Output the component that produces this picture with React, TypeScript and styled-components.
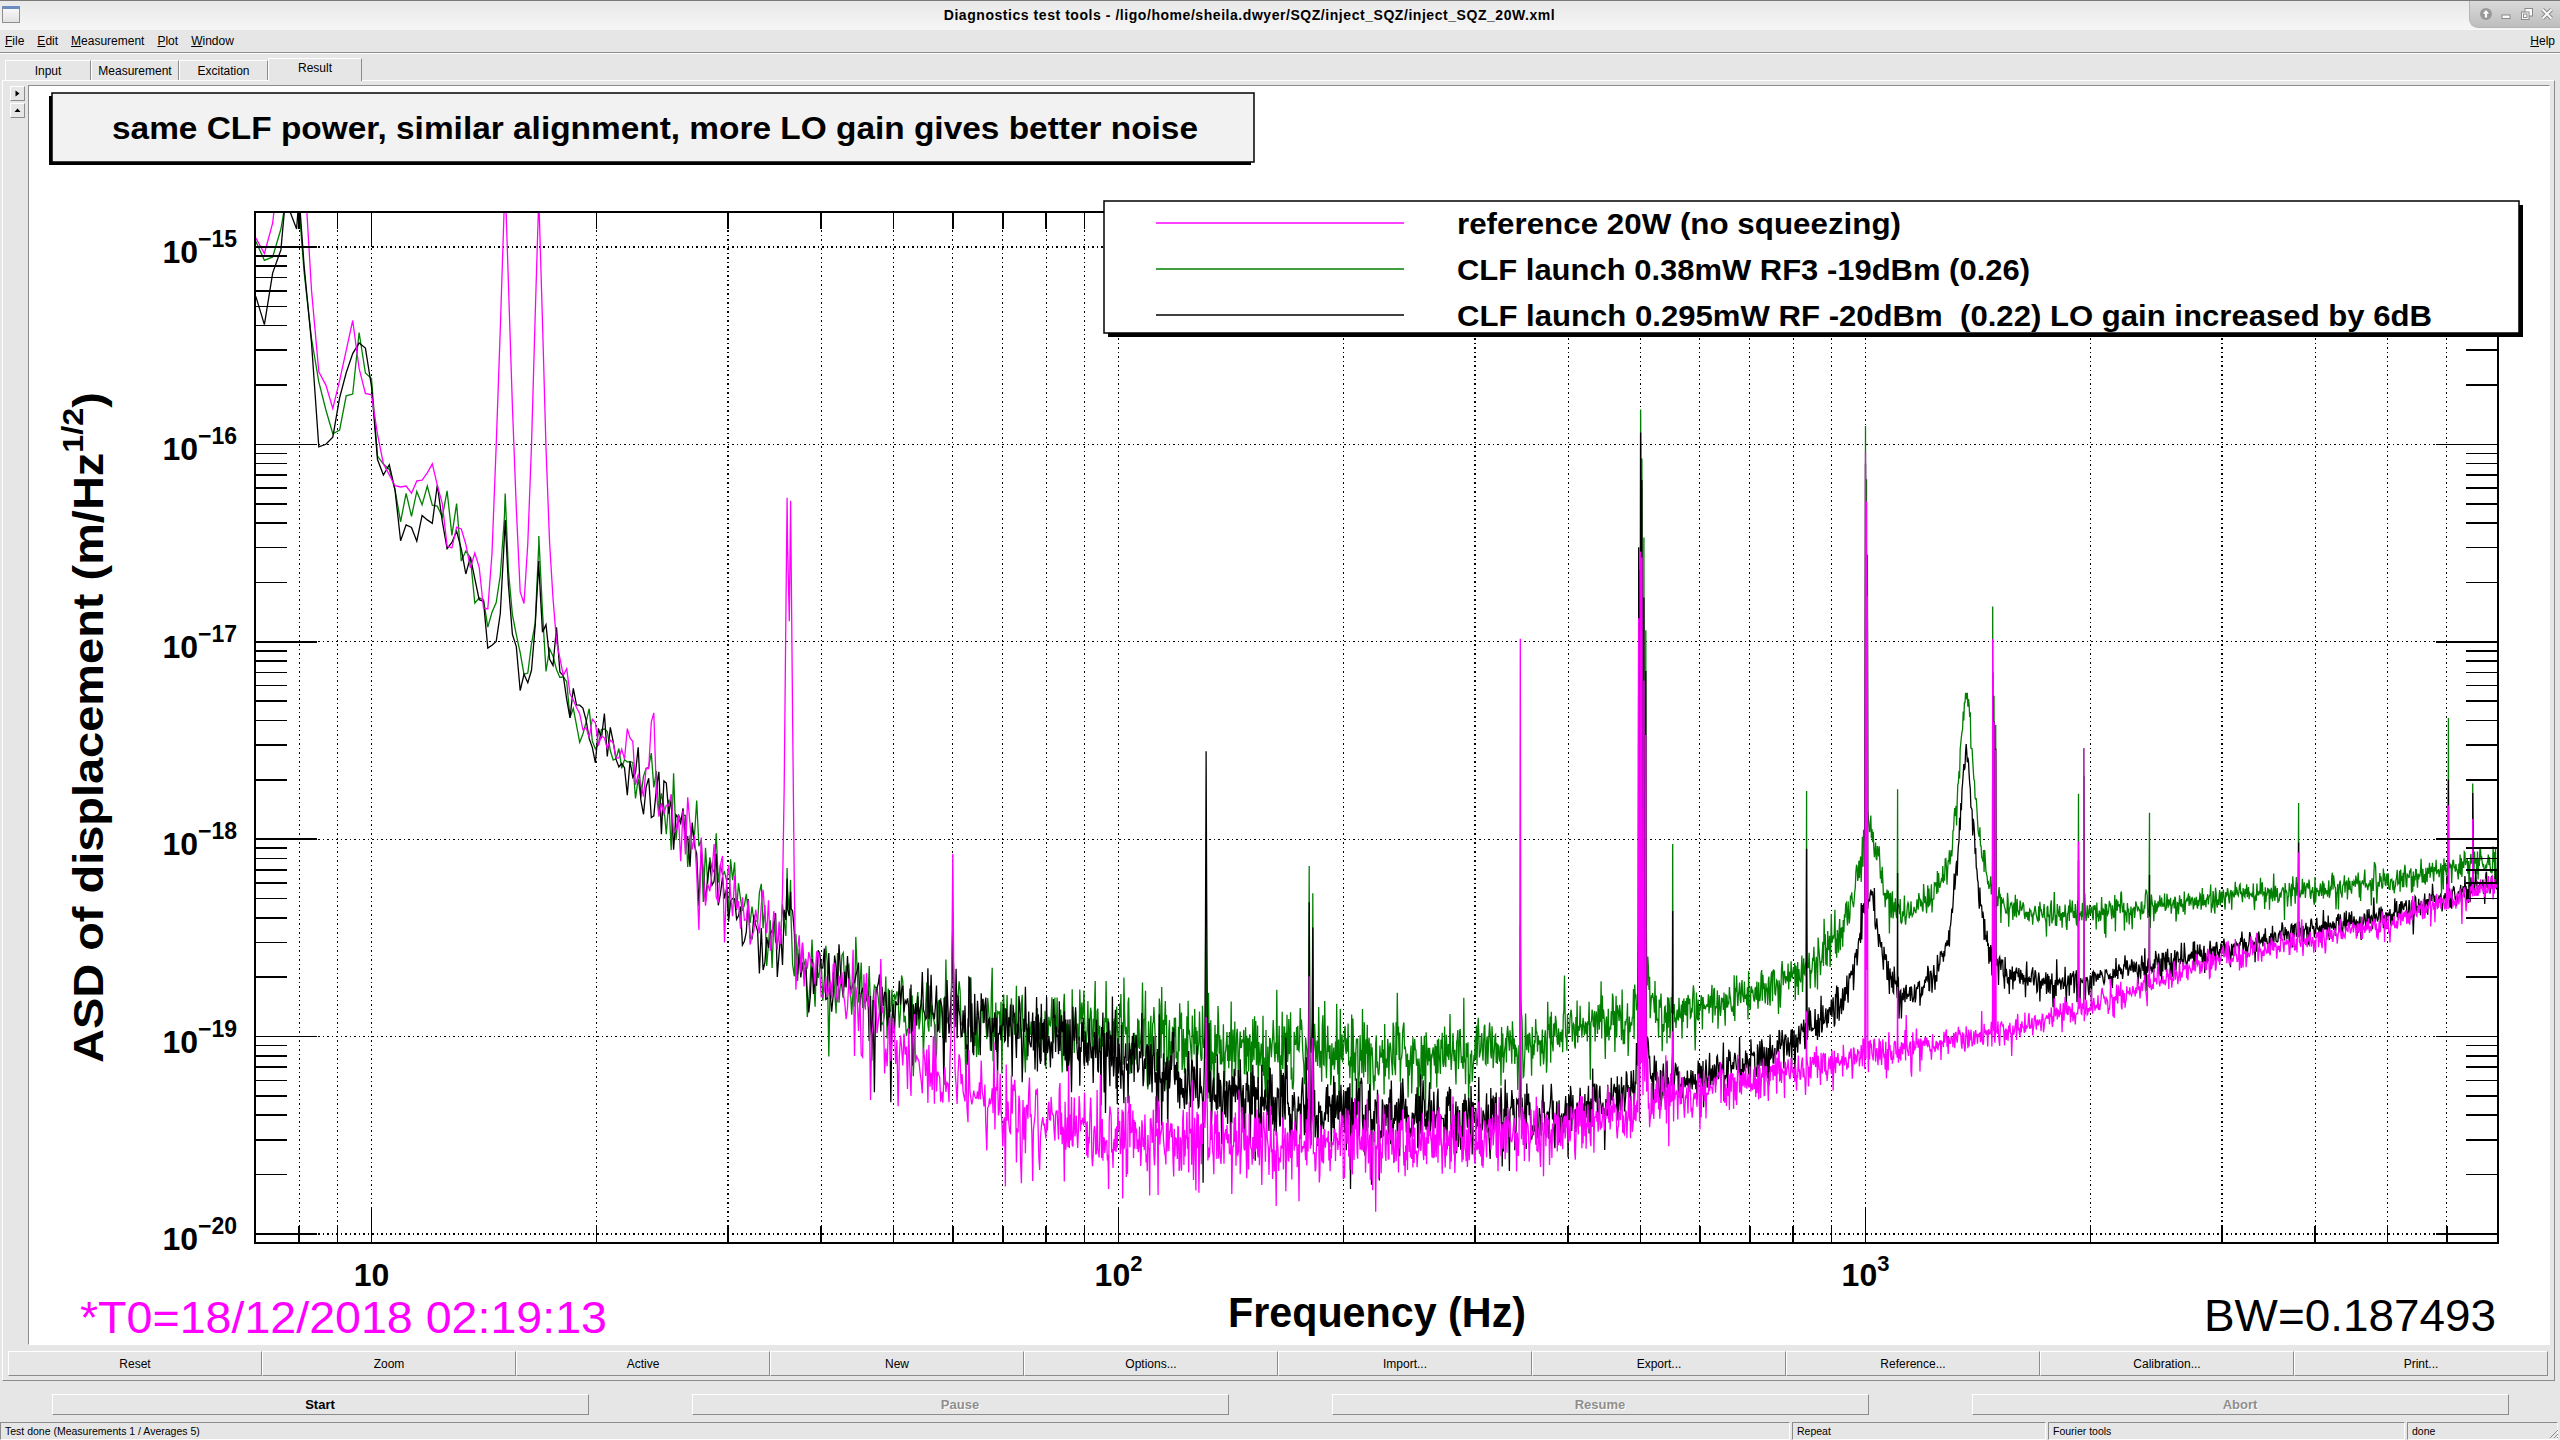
import React, { useMemo } from "react";
import styled, { createGlobalStyle } from "styled-components";

const UI_FONT = `"Liberation Sans", Arial, Helvetica, sans-serif`;
const FACE = "#e6e6e6";
const LIGHT = "#ffffff";
const DARK = "#8c8c8c";

const GlobalStyle = createGlobalStyle`
  html, body {
    margin: 0;
    padding: 0;
    overflow: hidden;
    background: ${FACE};
  }
  body {
    font-family: ${UI_FONT};
  }
`;

const Screen = styled.div`
  width: 2560px;
  height: 1440px;
  display: flex;
  flex-direction: column;
  background: ${FACE};
  font: 12px ${UI_FONT};
  color: #000;
  overflow: hidden;
`;

/* ---------- window title bar ---------- */

const TitleBar = styled.header`
  flex: none;
  height: 29px;
  border-top: 1px solid #7a7a7a;
  display: grid;
  grid-template-columns: 30px 1fr 91px;
  align-items: start;
  background: linear-gradient(#e8e8e8, #f6f6f6);
`;

const WindowIcon = styled.div`
  margin: 5px 0 0 2px;
  width: 18px;
  height: 17px;
  box-sizing: border-box;
  border: 1px solid #8f8f8f;
  border-top: 3px solid #6a8cc0;
  background: linear-gradient(#f8f8f8, #e2e2e2);
`;

const WindowTitle = styled.div`
  line-height: 28px;
  text-align: center;
  font-weight: bold;
  font-size: 14px;
  letter-spacing: 0.55px;
  white-space: nowrap;
`;

const WindowControls = styled.div`
  height: 27px;
  display: flex;
  align-items: center;
  justify-content: space-around;
  padding: 0 3px 0 6px;
  background: linear-gradient(#dadada, #bdbdbd);
  border-bottom-left-radius: 9px;
  border-left: 1px solid #b4b4b4;
  border-bottom: 1px solid #b4b4b4;
  box-sizing: border-box;
`;

/* ---------- menu ---------- */

const MenuBar = styled.nav`
  flex: none;
  height: 22px;
  display: flex;
  align-items: center;
  gap: 13px;
  padding: 0 5px;
  border-bottom: 1px solid ${DARK};
`;

const MenuItem = styled.span<{ $right?: boolean }>`
  margin-left: ${(p) => (p.$right ? "auto" : "0")};
`;

const Accel = styled.span`
  text-decoration: underline;
`;

/* ---------- tabs ---------- */

const TabStrip = styled.div`
  flex: none;
  height: 26px;
  border-top: 1px solid ${LIGHT};
  display: flex;
  align-items: flex-end;
  padding-left: 5px;
`;

const Tab = styled.div<{ $w: number; $active?: boolean }>`
  width: ${(p) => p.$w}px;
  height: ${(p) => (p.$active ? 23 : 20)}px;
  margin-bottom: ${(p) => (p.$active ? -1 : 0)}px;
  box-sizing: border-box;
  border-top: 1px solid ${LIGHT};
  border-left: 1px solid ${LIGHT};
  border-right: 1px solid ${DARK};
  background: ${FACE};
  display: flex;
  align-items: center;
  justify-content: center;
  padding-bottom: ${(p) => (p.$active ? 4 : 0)}px;
  position: relative;
  z-index: ${(p) => (p.$active ? 1 : 0)};
`;

const TabBody = styled.section`
  flex: none;
  height: 1301px;
  box-sizing: border-box;
  margin: 0 5px 0 2px;
  border: 1px solid;
  border-color: ${LIGHT} ${DARK} ${DARK} ${LIGHT};
  padding: 4px 4px 4px 0;
  display: flex;
  flex-direction: column;
  gap: 6px;
`;

const Workspace = styled.div`
  height: 1260px;
  display: flex;
`;

const SidePanel = styled.div`
  width: 25px;
  flex: none;
  display: flex;
  flex-direction: column;
  gap: 2px;
  padding: 1px 0 0 7px;
  box-sizing: border-box;
`;

const SideButton = styled.div`
  width: 15px;
  height: 15px;
  box-sizing: border-box;
  border: 1px solid;
  border-color: ${LIGHT} ${DARK} ${DARK} ${LIGHT};
  display: flex;
  align-items: center;
  justify-content: center;
`;

const CanvasFrame = styled.div`
  width: 2522px;
  height: 1260px;
  box-sizing: border-box;
  border: 1px solid;
  border-color: ${DARK} ${LIGHT} ${LIGHT} ${DARK};
  background: #fff;
`;

const PlotSvg = styled.svg`
  display: block;
`;

const PlotText = styled.text<{ $size: number; $bold?: boolean }>`
  font-family: ${UI_FONT};
  font-size: ${(p) => p.$size}px;
  font-weight: ${(p) => (p.$bold ? 700 : 400)};
  white-space: pre;
`;

const Sup = styled.tspan<{ $size: number }>`
  font-size: ${(p) => p.$size}px;
`;

const ButtonRow = styled.div`
  height: 25px;
  margin: 0 2px 0 5px;
  display: grid;
  grid-template-columns: repeat(10, 1fr);
`;

const PlotButton = styled.div`
  box-sizing: border-box;
  border: 1px solid;
  border-color: ${LIGHT} ${DARK} ${DARK} ${LIGHT};
  display: flex;
  align-items: center;
  justify-content: center;
`;

/* ---------- run controls + status ---------- */

const ControlRow = styled.div`
  flex: none;
  height: 41px;
  box-sizing: border-box;
  padding-top: 13px;
  display: grid;
  grid-template-columns: repeat(4, 1fr);
  justify-items: center;
  align-items: start;
`;

const ControlButton = styled.div<{ $disabled?: boolean }>`
  width: 537px;
  height: 21px;
  box-sizing: border-box;
  border: 1px solid;
  border-color: ${LIGHT} ${DARK} ${DARK} ${LIGHT};
  display: flex;
  align-items: center;
  justify-content: center;
  font-weight: bold;
  font-size: 13px;
  color: ${(p) => (p.$disabled ? "#8e8e8e" : "#000")};
  text-shadow: ${(p) => (p.$disabled ? `1px 1px 0 ${LIGHT}` : "none")};
`;

const StatusBar = styled.footer`
  flex: none;
  height: 18px;
  display: flex;
  gap: 2px;
  position: relative;
`;

const StatusCell = styled.div<{ $w: number }>`
  width: ${(p) => p.$w}px;
  flex: none;
  box-sizing: border-box;
  border: 1px solid;
  border-color: ${DARK} ${LIGHT} ${LIGHT} ${DARK};
  padding: 0 4px;
  font-size: 10.5px;
  line-height: 16px;
  white-space: nowrap;
  overflow: hidden;
`;

const Grip = styled.svg`
  position: absolute;
  right: 1px;
  bottom: 1px;
`;

/* ---------- plot geometry ---------- */

const X0 = 255;
const X1 = 2498;
const Y0 = 212;
const Y1 = 1243;
const DEC_X = 747;
const X10 = 371.5;
const DEC_Y = 197.4;
const Y15 = 247;

const fx = (f: number) => X10 + (Math.log10(f) - 1) * DEC_X;
const ly = (l: number) => Y15 + (-15 - l) * DEC_Y;

type Knot = [number, number];
type Bump = { f: number; w: number; h: number };
type Line = { f: number; w: number; top: [number, number, number] };

const KNOTS_M: Knot[] = [
  [7, -14.93], [7.3, -15.05], [7.6, -15.02], [7.8, -15.35], [8.05, -15.3],
  [8.3, -15.5], [8.5, -15.72], [9.0, -15.72], [9.5, -15.35], [9.75, -15.9],
  [10.0, -15.65], [10.2, -16.05], [10.8, -16.25], [11.5, -16.2], [11.8, -16.05],
  [12.3, -16.3], [13, -16.4], [14, -16.7], [14.3, -17.1], [15, -16.9],
  [16, -17.15], [17.5, -17.05], [18.5, -17.3], [20, -17.45], [24, -17.7],
  [26, -17.95], [29, -18.2], [32, -18.35], [35, -18.5], [40, -18.7],
  [45, -18.85], [50, -19.0], [60, -19.25], [70, -19.35], [80, -19.42],
  [100, -19.5], [150, -19.55], [200, -19.55], [300, -19.52], [400, -19.45],
  [500, -19.35], [700, -19.22], [1000, -19.1], [1500, -18.98], [2000, -18.85],
  [3000, -18.6], [5000, -18.42], [7000, -18.22],
];

const KNOTS_G: Knot[] = [
  [7, -15.0], [7.3, -15.1], [7.6, -15.2], [7.8, -15.15], [8.05, -15.3],
  [8.3, -15.55], [8.5, -15.7], [9.0, -16.15], [9.3, -15.7], [9.6, -15.5],
  [10, -15.7], [10.2, -16.1], [10.8, -16.25], [12, -16.3], [13, -16.45],
  [14, -16.75], [14.3, -17.0], [15, -16.85], [16, -17.2], [17.5, -17.1],
  [18.5, -17.3], [20, -17.45], [24, -17.72], [26, -17.95], [29, -18.2],
  [32, -18.38], [35, -18.52], [40, -18.7], [50, -18.85], [60, -18.9],
  [80, -18.95], [100, -18.97], [150, -19.05], [200, -19.1], [300, -19.1],
  [400, -18.98], [500, -18.92], [600, -18.87], [700, -18.8], [800, -18.72],
  [900, -18.6], [1000, -18.5], [1100, -18.5], [1200, -18.42], [1500, -18.42],
  [2000, -18.38], [3000, -18.3], [5000, -18.22], [7000, -18.1],
];

const KNOTS_K: Knot[] = [
  [7, -15.3], [7.3, -15.32], [7.6, -15.15], [7.8, -15.25], [8.05, -15.38],
  [8.3, -15.5], [8.5, -16.1], [9.0, -15.8], [9.5, -15.45], [10, -15.65],
  [10.2, -16.05], [10.8, -16.35], [11.2, -16.5], [12, -16.35], [13, -16.45],
  [14, -16.75], [14.3, -17.15], [15, -16.95], [16, -17.2], [17.6, -17.05],
  [18.5, -17.3], [20, -17.45], [24, -17.75], [26, -17.98], [29, -18.22],
  [32, -18.4], [35, -18.55], [40, -18.7], [50, -18.85], [60, -18.9],
  [80, -19.0], [100, -19.1], [130, -19.25], [150, -19.32], [200, -19.4],
  [300, -19.42], [400, -19.38], [500, -19.3], [700, -19.15], [900, -18.98],
  [1000, -18.9], [1100, -18.92], [1200, -18.88], [1500, -18.78], [2000, -18.72],
  [3000, -18.55], [5000, -18.38], [7000, -18.22],
];

const BUMPS_G: Bump[] = [
  { f: 505, w: 4, h: 0.5 },
  { f: 1010, w: 30, h: 0.55 },
  { f: 1365, w: 22, h: 1.15 },
];
const BUMPS_K: Bump[] = [
  { f: 505, w: 4, h: 0.5 },
  { f: 1010, w: 30, h: 0.6 },
  { f: 1365, w: 22, h: 1.25 },
];

// narrow lines: top value per trace [magenta, green, black]
const LINES: Line[] = [
  { f: 7.7, w: 0.25, top: [-14.2, -14.95, -14.9] },
  { f: 8.0, w: 0.25, top: [-14.2, -15.0, -15.0] },
  { f: 15.1, w: 0.3, top: [-14.7, -16.4, -16.5] },
  { f: 16.75, w: 0.3, top: [-14.75, -16.6, -16.7] },
  { f: 36.0, w: 0.2, top: [-16.25, -18.4, -18.4] },
  { f: 36.4, w: 0.2, top: [-16.3, -18.5, -18.5] },
  { f: 60, w: 0.25, top: [-18.1, -18.6, -18.5] },
  { f: 131, w: 0.3, top: [-19.0, -18.5, -17.6] },
  { f: 180, w: 0.3, top: [-18.8, -18.2, -18.3] },
  { f: 182, w: 0.3, top: [-19.2, -18.4, -18.5] },
  { f: 345, w: 0.3, top: [-16.98, -18.6, -18.7] },
  { f: 497, w: 0.3, top: [-16.9, -16.6, -16.5] },
  { f: 500, w: 0.3, top: [-16.55, -15.8, -15.9] },
  { f: 502, w: 0.3, top: [-16.6, -16.1, -16.2] },
  { f: 505, w: 0.3, top: [-17.2, -16.5, -16.8] },
  { f: 508, w: 0.3, top: [-17.5, -17.0, -17.2] },
  { f: 552, w: 0.4, top: [-19.3, -18.1, -18.4] },
  { f: 834, w: 0.4, top: [-19.2, -17.8, -18.1] },
  { f: 1000, w: 0.3, top: [-16.06, -15.93, -16.1] },
  { f: 1003, w: 0.3, top: [-16.3, -16.2, -16.5] },
  { f: 1006, w: 0.3, top: [-16.8, -16.6, -16.9] },
  { f: 1104, w: 0.4, top: [-19.0, -17.95, -18.3] },
  { f: 1480, w: 0.3, top: [-17.03, -16.85, -17.1] },
  { f: 1486, w: 0.3, top: [-17.4, -17.3, -17.4] },
  { f: 1494, w: 0.3, top: [-17.6, -17.5, -17.6] },
  { f: 1928, w: 0.4, top: [-18.06, -17.9, -18.2] },
  { f: 1960, w: 0.4, top: [-17.6, -17.6, -17.7] },
  { f: 2400, w: 0.4, top: [-18.6, -18.1, -18.4] },
  { f: 3800, w: 0.5, top: [-18.3, -18.0, -18.2] },
  { f: 6030, w: 0.5, top: [-18.0, -17.5, -17.8] },
  { f: 6500, w: 0.5, top: [-18.1, -17.9, -17.9] },
];

const FREQS: number[] = (() => {
  const out: number[] = [];
  let f = 7;
  while (f <= 7000) {
    out.push(f);
    f += Math.max(0.1875, (f * Math.LN10 * 0.6) / DEC_X);
  }
  LINES.forEach((l) => out.push(l.f));
  return out.sort((a, b) => a - b);
})();

function mulberry32(seed: number) {
  let a = seed >>> 0;
  return () => {
    a = (a + 0x6d2b79f5) >>> 0;
    let t = a;
    t = Math.imul(t ^ (t >>> 15), t | 1);
    t ^= t + Math.imul(t ^ (t >>> 7), t | 61);
    return ((t ^ (t >>> 14)) >>> 0) / 4294967296;
  };
}

function interp(knots: Knot[], f: number) {
  if (f <= knots[0][0]) return knots[0][1];
  const lf = Math.log10(f);
  for (let i = 1; i < knots.length; i++) {
    if (f <= knots[i][0]) {
      const [fa, va] = knots[i - 1];
      const [fb, vb] = knots[i];
      const t = (lf - Math.log10(fa)) / (Math.log10(fb) - Math.log10(fa));
      return va + t * (vb - va);
    }
  }
  return knots[knots.length - 1][1];
}

const sigma = (f: number) => {
  if (f < 20) return 0.07;
  if (f < 150) return 0.1;
  if (f > 1500) return 0.032;
  return 0.1 - Math.log10(f / 150) * 0.068;
};

function tracePath(knots: Knot[], bumps: Bump[], idx: number, seed: number) {
  const rand = mulberry32(seed);
  const gauss = () => {
    const u = 1 - rand();
    const v = rand();
    return Math.sqrt(-2 * Math.log(u)) * Math.cos(2 * Math.PI * v);
  };
  const pts: string[] = [];
  for (const f of FREQS) {
    let base = interp(knots, f);
    for (const b of bumps) {
      base += Math.log10(1 + (10 ** b.h - 1) / (1 + ((f - b.f) / b.w) ** 2));
    }
    const s = sigma(f);
    let n = gauss() * s;
    const r = rand();
    if (r < 0.04) n -= 2.2 * s;
    else if (r > 0.975) n += 1.8 * s;
    let amp = 10 ** (base + n);
    for (const l of LINES) {
      const d = Math.abs(f - l.f) / l.w;
      if (d < 8) amp += 10 ** (l.top[idx] - d + gauss() * 0.03);
    }
    pts.push(`${fx(f).toFixed(1)},${ly(Math.log10(amp)).toFixed(1)}`);
  }
  return "M" + pts.join("L");
}

const X_TICKS: { f: number; major: boolean }[] = [];
for (let p = 0; p <= 3; p++) {
  for (let k = 1; k <= 9; k++) {
    const f = k * 10 ** p;
    if (f > 7.01 && f < 6999) X_TICKS.push({ f, major: k === 1 });
  }
}

const Y_TICKS: { l: number; major: boolean }[] = [];
for (let n = -21; n <= -15; n++) {
  for (let k = 1; k <= 9; k++) {
    const l = n + Math.log10(k);
    if (l > -20.04 && l < -14.83) Y_TICKS.push({ l, major: k === 1 });
  }
}

const LEGEND = [
  { color: "#ff00ff", label: "reference 20W (no squeezing)", len: 444 },
  { color: "#007f00", label: "CLF launch 0.38mW RF3 -19dBm (0.26)", len: 573 },
  { color: "#000000", label: "CLF launch 0.295mW RF -20dBm  (0.22) LO gain increased by 6dB", len: 975 },
];

function Plot() {
  const traces = useMemo(
    () => [
      { color: "#007f00", d: tracePath(KNOTS_G, BUMPS_G, 1, 20181218) },
      { color: "#000000", d: tracePath(KNOTS_K, BUMPS_K, 2, 21913) },
      { color: "#ff00ff", d: tracePath(KNOTS_M, [], 0, 187493) },
    ],
    []
  );

  return (
    <PlotSvg width={2520} height={1258} viewBox="29 86 2520 1258">
      <defs>
        <clipPath id="frame-clip">
          <rect x={X0} y={Y0} width={X1 - X0} height={Y1 - Y0} />
        </clipPath>
      </defs>
      <rect x={29} y={86} width={2520} height={1258} fill="#fff" />

      {/* title pave */}
      <rect x={49} y={96} width={1202} height={69} fill="#000" />
      <rect x={52} y={93} width={1202} height={69} fill="#f2f2f2" stroke="#000" strokeWidth={1.5} />
      <PlotText $size={32} $bold x={655} y={139} textAnchor="middle" textLength={1086} lengthAdjust="spacingAndGlyphs">
        same CLF power, similar alignment, more LO gain gives better noise
      </PlotText>

      {/* grid */}
      <g stroke="#000" strokeWidth={1.2} strokeDasharray="1.5 3" shapeRendering="crispEdges">
        {X_TICKS.map((t) => (
          <line key={`gx${t.f}`} x1={fx(t.f)} x2={fx(t.f)} y1={Y0} y2={Y1} />
        ))}
        {Y_TICKS.filter((t) => t.major).map((t) => (
          <line key={`gy${t.l}`} x1={X0} x2={X1} y1={ly(t.l)} y2={ly(t.l)} />
        ))}
      </g>

      {/* traces */}
      <g clipPath="url(#frame-clip)" fill="none" strokeWidth={1.3} strokeLinejoin="miter">
        {traces.map((t) => (
          <path key={t.color} d={t.d} stroke={t.color} />
        ))}
      </g>

      {/* frame and ticks */}
      <g stroke="#000" strokeWidth={1.6} shapeRendering="crispEdges">
        <rect x={X0} y={Y0} width={X1 - X0} height={Y1 - Y0} fill="none" />
        {X_TICKS.map((t) => {
          const len = t.major ? 35 : 17;
          const x = fx(t.f);
          return (
            <g key={`tx${t.f}`}>
              <line x1={x} x2={x} y1={Y1} y2={Y1 - len} />
              <line x1={x} x2={x} y1={Y0} y2={Y0 + len} />
            </g>
          );
        })}
        {Y_TICKS.map((t) => {
          const len = t.major ? 62 : 32;
          const y = ly(t.l);
          return (
            <g key={`ty${t.l}`}>
              <line x1={X0} x2={X0 + len} y1={y} y2={y} />
              <line x1={X1} x2={X1 - len} y1={y} y2={y} />
            </g>
          );
        })}
      </g>

      {/* y tick labels */}
      {[-15, -16, -17, -18, -19, -20].map((n) => (
        <PlotText key={`yl${n}`} $size={32} $bold x={237} y={ly(n) + 16} textAnchor="end">
          10
          <Sup $size={23} dy={-16}>
            {`\u2212${-n}`}
          </Sup>
        </PlotText>
      ))}

      {/* x tick labels */}
      <PlotText $size={32} $bold x={fx(10)} y={1286} textAnchor="middle">
        10
      </PlotText>
      {[2, 3].map((p) => (
        <PlotText key={`xl${p}`} $size={32} $bold x={fx(10 ** p)} y={1286} textAnchor="middle">
          10
          <Sup $size={22} dy={-15}>
            {p}
          </Sup>
        </PlotText>
      ))}

      {/* axis titles */}
      <PlotText $size={42} $bold x={1377} y={1327} textAnchor="middle" textLength={298} lengthAdjust="spacingAndGlyphs">
        Frequency (Hz)
      </PlotText>
      <PlotText
        $size={42}
        $bold
        transform="translate(103 1063) rotate(-90)"
        textLength={671}
        lengthAdjust="spacingAndGlyphs"
      >
        ASD of displacement (m/Hz
        <Sup $size={29} dy={-20}>
          1/2
        </Sup>
        <Sup $size={42} dy={20}>
          )
        </Sup>
      </PlotText>

      <PlotText $size={45} x={80} y={1333} fill="#ff00ff" textLength={527} lengthAdjust="spacingAndGlyphs">
        *T0=18/12/2018 02:19:13
      </PlotText>
      <PlotText $size={45} x={2496} y={1331} textAnchor="end" textLength={292} lengthAdjust="spacingAndGlyphs">
        BW=0.187493
      </PlotText>

      {/* legend */}
      <rect x={1108} y={205} width={1415} height={132} fill="#000" />
      <rect x={1104} y={201} width={1415} height={132} fill="#fff" stroke="#000" strokeWidth={1.5} />
      {LEGEND.map((e, i) => {
        const y = 223 + i * 46;
        return (
          <g key={e.label}>
            <line x1={1156} x2={1404} y1={y} y2={y} stroke={e.color} strokeWidth={1.6} />
            <PlotText $size={29} $bold x={1457} y={y + 10.5} textLength={e.len} lengthAdjust="spacingAndGlyphs">
              {e.label}
            </PlotText>
          </g>
        );
      })}
    </PlotSvg>
  );
}

/* ---------- small glyphs ---------- */

const Triangle = ({ dir }: { dir: "right" | "up" }) => (
  <svg width="7" height="7" viewBox="0 0 7 7">
    <polygon points={dir === "right" ? "1.5,0.5 5.5,3.5 1.5,6.5" : "0.5,5 3.5,1.5 6.5,5"} fill="#000" />
  </svg>
);

const ControlIcon = ({ kind }: { kind: "up" | "min" | "max" | "close" }) => (
  <svg width="14" height="14" viewBox="0 0 14 14">
    {kind === "up" && (
      <>
        <circle cx="7" cy="7" r="6" fill="#9a9a9a" />
        <path d="M7 2.5 L11 7 H8.6 V11 H5.4 V7 H3 Z" fill="#fafafa" stroke="#7d7d7d" strokeWidth="0.6" />
      </>
    )}
    {kind === "min" && <rect x="3" y="8" width="8" height="3.5" fill="#fafafa" stroke="#8a8a8a" />}
    {kind === "max" && (
      <>
        <rect x="5" y="1.5" width="7.5" height="7.5" fill="#fafafa" stroke="#8a8a8a" />
        <rect x="1.5" y="5" width="7.5" height="7.5" fill="#fafafa" stroke="#8a8a8a" />
        <rect x="3.5" y="7" width="3.5" height="3.5" fill="none" stroke="#8a8a8a" />
      </>
    )}
    {kind === "close" && (
      <>
        <path d="M2.5 2.5 L11.5 11.5 M11.5 2.5 L2.5 11.5" stroke="#8a8a8a" strokeWidth="4" />
        <path d="M2.5 2.5 L11.5 11.5 M11.5 2.5 L2.5 11.5" stroke="#fafafa" strokeWidth="2" />
      </>
    )}
  </svg>
);

const PLOT_BUTTONS = [
  "Reset", "Zoom", "Active", "New", "Options...",
  "Import...", "Export...", "Reference...", "Calibration...", "Print...",
];

const TABS = [
  { label: "Input", w: 86 },
  { label: "Measurement", w: 88 },
  { label: "Excitation", w: 89 },
  { label: "Result", w: 94, active: true },
];

export default function App() {
  return (
    <Screen>
      <GlobalStyle />
      <TitleBar>
        <WindowIcon />
        <WindowTitle>
          Diagnostics test tools - /ligo/home/sheila.dwyer/SQZ/inject_SQZ/inject_SQZ_20W.xml
        </WindowTitle>
        <WindowControls>
          <ControlIcon kind="up" />
          <ControlIcon kind="min" />
          <ControlIcon kind="max" />
          <ControlIcon kind="close" />
        </WindowControls>
      </TitleBar>

      <MenuBar>
        <MenuItem><Accel>F</Accel>ile</MenuItem>
        <MenuItem><Accel>E</Accel>dit</MenuItem>
        <MenuItem><Accel>M</Accel>easurement</MenuItem>
        <MenuItem><Accel>P</Accel>lot</MenuItem>
        <MenuItem><Accel>W</Accel>indow</MenuItem>
        <MenuItem $right><Accel>H</Accel>elp</MenuItem>
      </MenuBar>

      <TabStrip>
        {TABS.map((t) => (
          <Tab key={t.label} $w={t.w} $active={t.active}>
            {t.label}
          </Tab>
        ))}
      </TabStrip>

      <TabBody>
        <Workspace>
          <SidePanel>
            <SideButton><Triangle dir="right" /></SideButton>
            <SideButton><Triangle dir="up" /></SideButton>
          </SidePanel>
          <CanvasFrame>
            <Plot />
          </CanvasFrame>
        </Workspace>
        <ButtonRow>
          {PLOT_BUTTONS.map((b) => (
            <PlotButton key={b}>{b}</PlotButton>
          ))}
        </ButtonRow>
      </TabBody>

      <ControlRow>
        <ControlButton>Start</ControlButton>
        <ControlButton $disabled>Pause</ControlButton>
        <ControlButton $disabled>Resume</ControlButton>
        <ControlButton $disabled>Abort</ControlButton>
      </ControlRow>

      <StatusBar>
        <StatusCell $w={1790}>Test done (Measurements 1 / Averages 5)</StatusCell>
        <StatusCell $w={254}>Repeat</StatusCell>
        <StatusCell $w={357}>Fourier tools</StatusCell>
        <StatusCell $w={151}>done</StatusCell>
        <Grip width="12" height="12" viewBox="0 0 12 12">
          <path d="M11 3 L3 11 M11 7 L7 11 M11 10 L10 11" stroke="#8c8c8c" strokeWidth="1" />
        </Grip>
      </StatusBar>
    </Screen>
  );
}
